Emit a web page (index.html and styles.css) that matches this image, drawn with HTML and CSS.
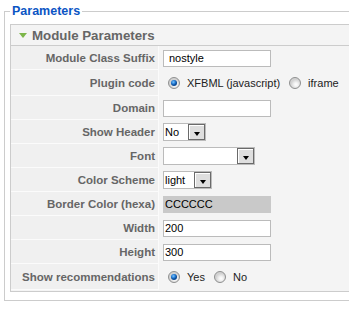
FILE: index.html
```html
<!DOCTYPE html>
<html lang="en">
<head>
    <meta charset="UTF-8">
    <title>Parameters</title>
    <link rel="stylesheet" href="styles.css">
</head>
<body>
    <fieldset class="params">
        <legend>Parameters</legend>
        <div class="pane">
            <h3 class="pane-title"><span class="arrow"></span>Module Parameters</h3>
            <div class="paramlist">
                <div class="row">
                    <div class="key">Module Class Suffix</div>
                    <div class="value"><input type="text" class="text first" value="nostyle"></div>
                </div>
                <div class="row tall">
                    <div class="key">Plugin code</div>
                    <div class="value">
                        <span class="radio on"></span><span class="opt">XFBML (javascript)</span>
                        <span class="radio"></span><span class="opt">iframe</span>
                    </div>
                </div>
                <div class="row">
                    <div class="key">Domain</div>
                    <div class="value"><input type="text" class="text" value=""></div>
                </div>
                <div class="row">
                    <div class="key">Show Header</div>
                    <div class="value"><span class="select w-no"><span class="sel-text">No</span><span class="btn"></span></span></div>
                </div>
                <div class="row">
                    <div class="key">Font</div>
                    <div class="value"><span class="select w-font"><span class="sel-text"></span><span class="btn"></span></span></div>
                </div>
                <div class="row">
                    <div class="key">Color Scheme</div>
                    <div class="value"><span class="select w-light"><span class="sel-text">light</span><span class="btn"></span></span></div>
                </div>
                <div class="row">
                    <div class="key">Border Color (hexa)</div>
                    <div class="value"><input type="text" class="text grey" value="CCCCCC"></div>
                </div>
                <div class="row">
                    <div class="key">Width</div>
                    <div class="value"><input type="text" class="text" value="200"></div>
                </div>
                <div class="row">
                    <div class="key">Height</div>
                    <div class="value"><input type="text" class="text" value="300"></div>
                </div>
                <div class="row tall">
                    <div class="key">Show recommendations</div>
                    <div class="value">
                        <span class="radio on"></span><span class="opt">Yes</span>
                        <span class="radio"></span><span class="opt">No</span>
                    </div>
                </div>
            </div>
        </div>
    </fieldset>
</body>
</html>
```

FILE: styles.css
```css
body {
    margin: 0;
    font-family: "Liberation Sans", Arial, sans-serif;
    font-size: 11px;
    background-color: #fff;
}

/* the fieldset and panel run on past the right edge, so no right border */
.params {
    margin: 4px 0 0 4px;
    padding: 5px 0 8px 5px;
    border: 1px solid #ccc;
    border-right: none;
}

.params legend {
    padding: 0 2px;
    color: #0b55c4;
    font-weight: bold;
    font-size: 12.5px;
    line-height: 15px;
}

.pane {
    border: 1px solid #ccc;
    border-right: none;
    background-color: #f4f4f4;
}

.pane-title {
    margin: 0;
    height: 20px;
    padding-left: 8px;
    border-bottom: 1px solid #ccc;
    display: flex;
    align-items: center;
    gap: 5px;
    color: #666;
    font-size: 13.3px;
    font-weight: bold;
}

.arrow {
    width: 0;
    height: 0;
    border-left: 4.5px solid transparent;
    border-right: 4.5px solid transparent;
    border-top: 5px solid #7db64a;
    margin-top: 1px;
}

.paramlist {
    padding-bottom: 1px;
}

.row {
    display: grid;
    grid-template-columns: 148px 1fr;
    height: 24px;
}

.row.tall {
    height: 26px;
}

.key {
    box-sizing: border-box;
    padding-right: 3px;
    border-right: 1px solid #fbfbfb;
    border-bottom: 1px solid #fbfbfb;
    background-color: #f0f0f0;
    color: #666;
    font-weight: bold;
    font-size: 11.5px;
    text-align: right;
    display: flex;
    align-items: center;
    justify-content: flex-end;
}

.value {
    padding-left: 4px;
    display: flex;
    align-items: center;
    color: #222;
}

.text {
    box-sizing: border-box;
    width: 108px;
    height: 17px;
    margin: 0;
    padding: 0 1px;
    border: 1px solid #bbb;
    background-color: #fff;
    font-family: "Liberation Sans", Arial, sans-serif;
    font-size: 11px;
    color: #000;
}

.text.first {
    padding-left: 5px;
}

.text.grey {
    background-color: #c9c9c9;
    border-color: #c9c9c9;
}

.select {
    box-sizing: border-box;
    height: 18px;
    border: 1px solid #bbb;
    background-color: #fff;
    display: flex;
    align-items: center;
    justify-content: space-between;
    color: #000;
}

.w-no { width: 43px; }
.w-font { width: 92px; }
.w-light { width: 49px; }

.sel-text {
    padding-left: 1px;
}

.btn {
    box-sizing: border-box;
    width: 17px;
    height: 16px;
    border: 1px solid #6a6a6a;
    background-color: #dedede;
    box-shadow: inset 1px 1px #fff;
    display: flex;
    align-items: center;
    justify-content: center;
}

.btn::after {
    content: "";
    margin-top: 3px;
    border-left: 3.5px solid transparent;
    border-right: 3.5px solid transparent;
    border-top: 4px solid #000;
}

.radio {
    box-sizing: border-box;
    width: 12px;
    height: 12px;
    margin-left: 5px;
    margin-right: 7px;
    border: 1px solid #8e8f8f;
    border-radius: 50%;
    background: radial-gradient(circle at 60% 65%, #fff 0, #f2f2f2 2px, #d2d2d2 5px);
    display: flex;
    align-items: center;
    justify-content: center;
}

.radio + .opt + .radio {
    margin-left: 9px;
}

.radio.on::after {
    content: "";
    width: 6px;
    height: 6px;
    border-radius: 50%;
    background: radial-gradient(circle at 40% 35%, #7cc4ff 0, #1f78d1 2px, #0a4a96 3px);
}
```
